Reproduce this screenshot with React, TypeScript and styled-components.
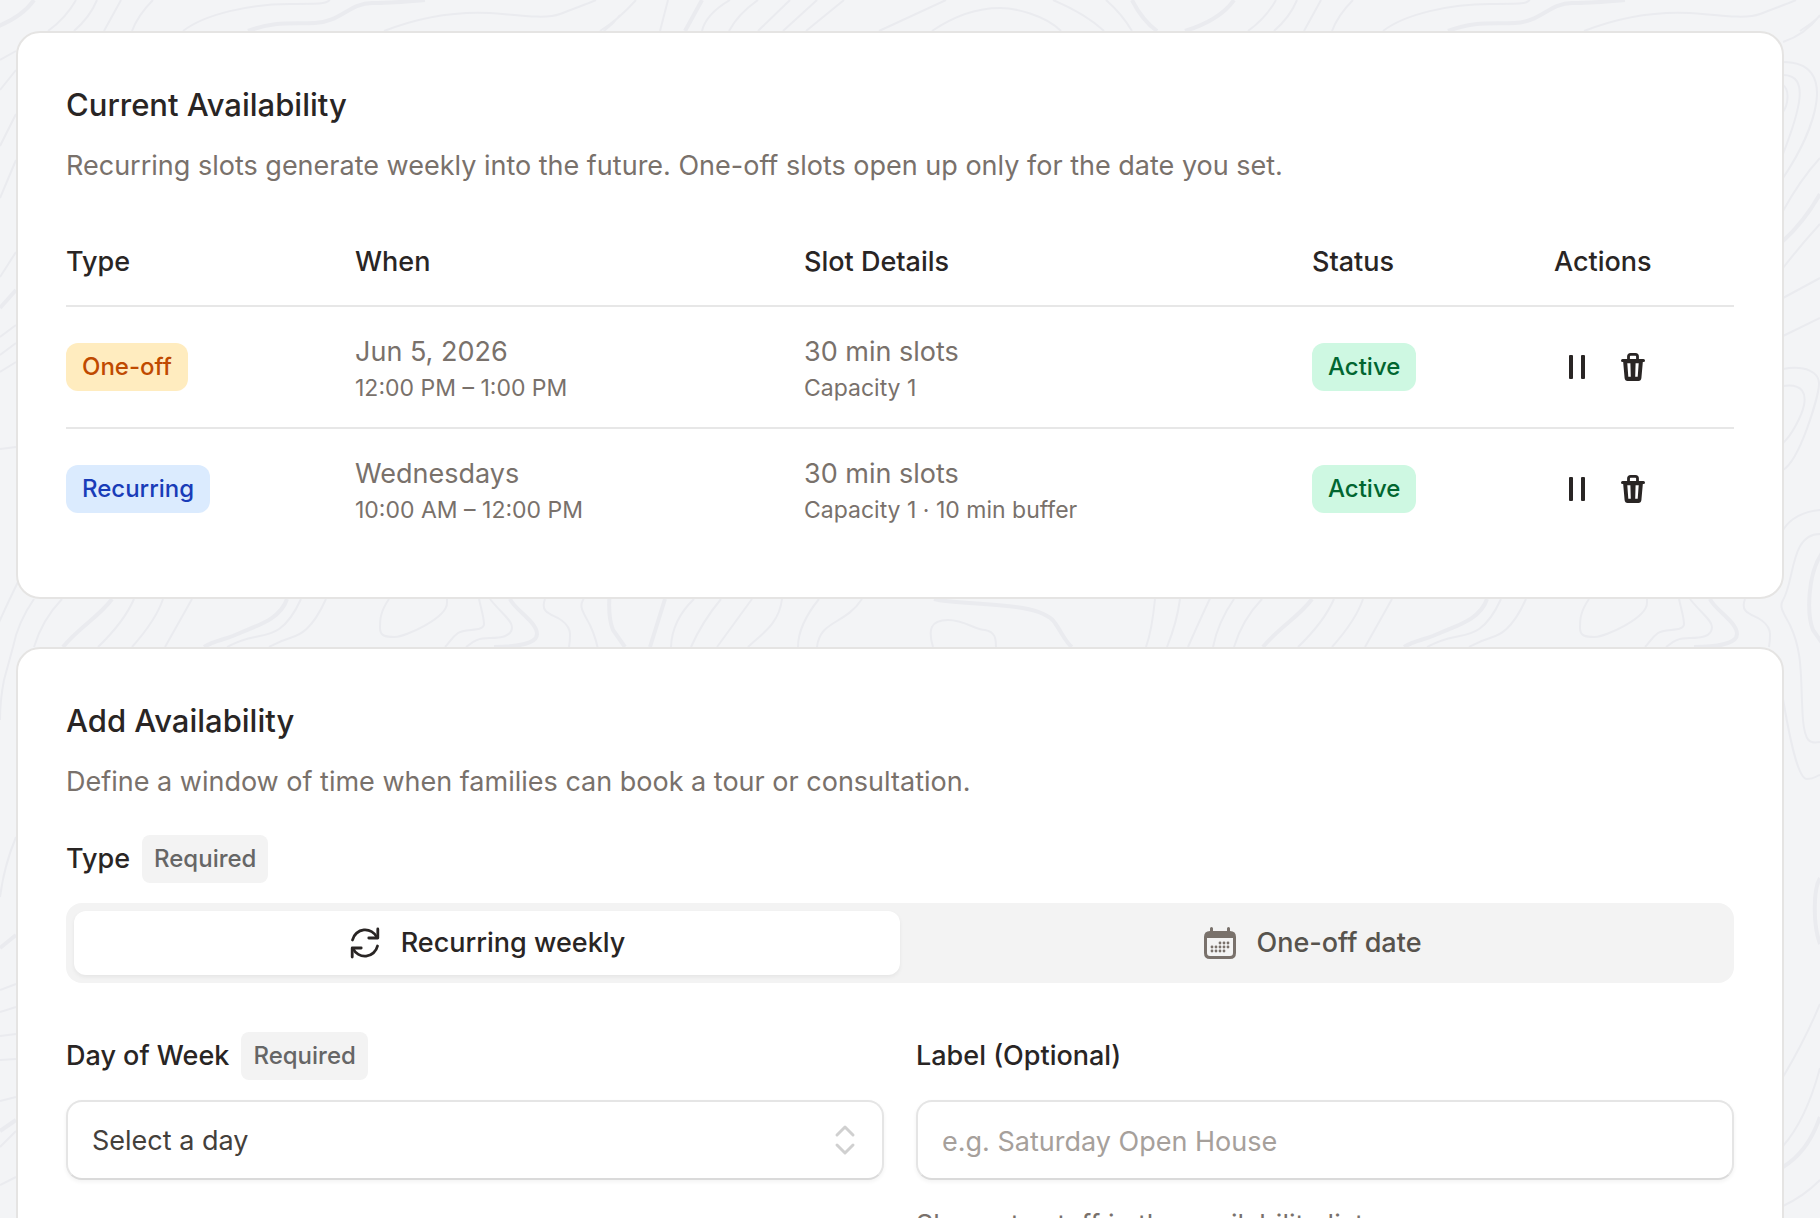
import React, { useState } from 'react';
import styled, { createGlobalStyle } from 'styled-components';

const GlobalStyle = createGlobalStyle`
  *, *::before, *::after { box-sizing: border-box; }
  body {
    margin: 0;
    background: #f3f4f6;
    color: #292524;
    font-family: Inter, "Liberation Sans", sans-serif;
    font-size: 27px;
    line-height: 42px;
  }
  button, input, select { font: inherit; color: inherit; }
`;

const Page = styled.main`
  position: relative;
  display: flex;
  flex-direction: column;
  gap: 48px;
  height: 100vh;
  padding: 31px 36px 0 16px;
  overflow: hidden;
`;

const Backdrop = styled.svg`
  position: absolute;
  inset: 0;
  width: 100%;
  height: 100%;
  fill: none;
  stroke: #eaebef;
  stroke-width: 2;
  pointer-events: none;
`;

const Card = styled.section`
  position: relative;
  flex: none;
  padding: 48px;
  background: #fff;
  border: 2px solid #e5e4e3;
  border-radius: 24px;
`;

const CardHeader = styled.header`
  display: flex;
  flex-direction: column;
  gap: 12px;
`;

const Title = styled.h2`
  margin: 0;
  font-size: 31px;
  font-weight: 500;
  line-height: 48px;
`;

const Description = styled.p`
  margin: 0;
  color: #79716b;
  line-height: 50px;
`;

const Table = styled.table`
  width: 100%;
  margin-top: 26px;
  table-layout: fixed;
  border-collapse: separate;
  border-spacing: 0;
`;

const Column = styled.col<{ $width: number }>`
  width: ${(p) => p.$width}px;
`;

const HeadCell = styled.th`
  padding: 24px 0 22px;
  border-bottom: 2px solid #e7e7e7;
  font-weight: 500;
  text-align: left;
`;

const Row = styled.tr`
  &:not(:last-child) > td { border-bottom: 2px solid #e7e7e7; }
`;

const Cell = styled.td`
  padding: 24px 0;
  color: #79716b;
  vertical-align: middle;
`;

const Primary = styled.div`
  line-height: 42px;
`;

const Secondary = styled.div`
  font-size: 23px;
  line-height: 30px;
`;

const tones = {
  amber: { bg: '#ffecbf', fg: '#bf4a00' },
  blue: { bg: '#dbebfe', fg: '#193cb8' },
  green: { bg: '#cef8e2', fg: '#016630' },
};

const Badge = styled.span<{ $tone: keyof typeof tones }>`
  display: block;
  width: fit-content;
  padding: 0 16px;
  border-radius: 12px;
  background: ${(p) => tones[p.$tone].bg};
  color: ${(p) => tones[p.$tone].fg};
  font-size: 24px;
  font-weight: 500;
  line-height: 48px;
`;

const Actions = styled.div`
  display: flex;
  gap: 8px;
`;

const IconButton = styled.button`
  display: grid;
  place-items: center;
  width: 48px;
  height: 48px;
  padding: 0;
  border: 0;
  border-radius: 12px;
  background: none;
  color: #292524;
  cursor: pointer;
  &:hover { background: #f3f3f3; }
`;

const Icon = styled.svg`
  flex: none;
  width: 32px;
  height: 32px;
`;

const LabelRow = styled.div`
  display: flex;
  align-items: center;
  gap: 12px;
  height: 48px;
  margin-bottom: 20px;
`;

const Label = styled.label`
  font-weight: 500;
`;

const Required = styled.span`
  padding: 0 12px;
  border-radius: 8px;
  background: #f3f3f3;
  color: #666;
  font-size: 24px;
  font-weight: 500;
  line-height: 48px;
`;

const TypeField = styled.div`
  margin-top: 28px;
`;

const Segmented = styled.div`
  display: grid;
  grid-template-columns: 1fr 1fr;
  padding: 8px;
  border-radius: 16px;
  background: #f3f3f3;
`;

const Segment = styled.button<{ $active: boolean }>`
  display: flex;
  align-items: center;
  justify-content: center;
  gap: 20px;
  height: 64px;
  padding: 0;
  border: 0;
  border-radius: 12px;
  background: ${(p) => (p.$active ? '#fff' : 'transparent')};
  box-shadow: ${(p) => (p.$active ? '0 2px 4px rgba(0, 0, 0, 0.06)' : 'none')};
  color: ${(p) => (p.$active ? '#292524' : '#57534d')};
  font-weight: 500;
  cursor: pointer;
  & > svg { color: ${(p) => (p.$active ? '#292524' : '#79716b')}; }
`;

const Fields = styled.div`
  display: grid;
  grid-template-columns: 1fr 1fr;
  gap: 32px;
  margin-top: 49px;
`;

const Control = styled.div`
  position: relative;
`;

const controlStyle = `
  display: block;
  width: 100%;
  height: 80px;
  padding: 2px 24px 0;
  border: 2px solid #e5e5e5;
  border-bottom-color: #dadada;
  border-radius: 16px;
  background: #fff;
  box-shadow: 0 2px 4px rgba(0, 0, 0, 0.05);
  outline-color: #a6a09b;
`;

const Select = styled.select`
  ${controlStyle}
  appearance: none;
  color: #44403b;
`;

const Input = styled.input`
  ${controlStyle}
  &::placeholder { color: #a6a09b; opacity: 1; }
`;

const SelectArrows = styled(Icon)`
  position: absolute;
  top: 24px;
  right: 23px;
  color: #d0d0d0;
  pointer-events: none;
`;

const Hint = styled.p`
  margin: 24px 0 0;
  color: #79716b;
`;

const THIN_LINES = [
  // top edge
  'M76 0Q66 18 48 31', 'M97 0Q90 17 74 31', 'M121 0L104 31', 'M153 0Q138 15 132 31',
  'M183 31C205 14 250 4 290 4S325 3 330 0', 'M384 31C430 13 470 12 490 13S545 20 560 14S590 3 596 0',
  'M636 0Q618 20 600 31', 'M668 0L660 31', 'M730 0Q706 14 702 31', 'M758 0Q738 14 729 31',
  'M790 0L758 31', 'M817 0L783 31', 'M844 0L806 31', 'M946 0L879 31',
  'M932 31C960 12 985 8 1000 8S1045 15 1061 31', 'M1053 0Q1086 14 1104 31', 'M1106 0Q1122 14 1132 31',
  // band between the cards
  'M18 582Q6 606 -12 647', 'M34 599Q18 622 13 647L4 680Q0 700 0 720', 'M62 599Q42 620 34 647',
  'M134 599Q124 622 98 647', 'M163 599Q156 620 132 647', 'M192 599L165 647',
  'M301 599C285 634 270 634 255 637S235 643 227 647', 'M326 599C312 630 300 635 290 638S274 645 269 647',
  'M389 599C380 612 380 620 380 628S385 637 395 637S447 618 447 603V599',
  'M479 599C482 612 484 618 484 624C484 632 465 628 458 633S450 642 445 647',
  'M490 599C500 612 512 620 512 627C512 637 500 638 490 638C475 638 472 643 466 647',
  'M545 599C540 612 550 614 558 618C572 626 571 634 569 647',
  'M620 534C590 534 595 580 583 600C579 607 583 612 590 625C604 655 600 680 603 720C605 742 610 744 620 742',
  'M694 599Q672 620 671 647', 'M721 599Q702 622 691 647', 'M752 599L717 647',
  'M782 599C779 625 760 635 748 647', 'M819 599Q798 625 798 647', 'M862 599C845 625 820 620 817 647',
  'M933 647C928 630 930 620 948 620C965 620 975 630 985 630C995 632 996 638 996 647',
  'M1155 599Q1152 630 1146 647', 'M1180 599Q1177 622 1167 647',
  // right margin
  'M583 42Q606 34 620 15', 'M583 62C640 62 615 130 583 178', 'M583 75C610 75 600 110 583 154',
  'M583 85C590 90 588 105 583 112', 'M583 211Q600 180 620 158', 'M583 268Q600 246 620 224',
  'M583 298L620 278', 'M583 336L620 318', 'M583 369C605 365 620 372 619 385S600 460 583 470',
  'M583 386C604 383 606 395 604 405S592 435 583 443', 'M583 530C590 518 605 511 620 510',
  'M583 699C590 740 598 779 607 779S615 776 620 775', 'M583 1077Q605 1040 620 1004',
  'M583 1146Q606 1120 620 1068', 'M583 1206Q604 1196 620 1180',
  // left margin
  'M16 51L0 60', 'M16 70L0 90', 'M16 114L0 146', 'M16 160L0 198', 'M16 252L0 277', 'M16 325L0 337',
  'M16 343L0 355', 'M16 362L0 372', 'M16 447L0 449', 'M16 837Q4 866 0 897', 'M16 984L0 990',
  'M16 1007L0 1012', 'M16 1034L0 1036', 'M16 1059L0 1060', 'M16 1097L0 1101', 'M16 1131L0 1147', 'M16 1177L0 1185',
];

const THICK_LINES = [
  'M34 0Q20 20 -15 31', 'M248 31C275 21 290 24 315 23S350 3 372 3S410 1 425 0', 'M702 0L685 31',
  'M1132 0Q1142 20 1157 31', 'M112 599C100 616 78 628 63 647',
  'M287 599C280 620 255 626 240 633S215 640 204 647',
  'M510 599C515 610 537 622 537 634C537 644 515 647 494 647',
  'M622 553C607 575 607 615 613 630L625 647', 'M665 599L650 647',
  'M934 599C960 606 1040 600 1055 623C1062 633 1066 643 1072 647',
  'M583 241Q604 222 620 194', 'M620 878C613 890 613 925 620 944', 'M583 1167Q608 1152 620 1117',
  'M16 290L0 308', 'M16 935L0 948', 'M16 1120L0 1131',
];

const ContourBackdrop = () => (
  <Backdrop aria-hidden="true">
    <defs>
      <g id="contours">
        <path d={THIN_LINES.join('')} />
        <path d={THICK_LINES.join('')} strokeWidth="4" />
      </g>
    </defs>
    <use href="#contours" />
    <use href="#contours" x="1200" />
  </Backdrop>
);

const PauseIcon = () => (
  <Icon viewBox="0 0 32 32" fill="currentColor" aria-hidden="true">
    <rect x="7" y="4" width="4" height="24" rx="1" />
    <rect x="19" y="4" width="4" height="24" rx="1" />
  </Icon>
);

const TrashIcon = () => (
  <Icon viewBox="0 0 32 32" fill="currentColor" aria-hidden="true">
    <path d="M10.5 8V5.5Q10.5 3.4 12.6 3.4H17.4Q19.5 3.4 19.5 5.5V8" fill="none" stroke="currentColor" strokeWidth="2.8" />
    <path d="M4.5 8H25.5A1.5 1.5 0 0 1 25.5 11H4.5A1.5 1.5 0 0 1 4.5 8Z" />
    <path
      fillRule="evenodd"
      d="M5 9H25L23.4 27Q23.1 30 20.4 30H9.6Q6.9 30 6.6 27ZM9.3 12.2L10.3 25.8H12.8L12.4 12.2ZM17.6 12.2L17.2 25.8H19.7L20.7 12.2Z"
    />
  </Icon>
);

const SyncIcon = () => (
  <Icon viewBox="0 0 32 32" fill="none" stroke="currentColor" strokeWidth="2.8" strokeLinecap="round" strokeLinejoin="round" aria-hidden="true">
    <path d="M3.5 13A13 13 0 0 1 28 10.5" />
    <path d="M28.8 2V11H19.8" />
    <path d="M28.5 19A13 13 0 0 1 4 21.5" />
    <path d="M3.2 30V21H12.2" />
  </Icon>
);

const dots: Array<[number, number]> = [
  [16, 16], [20, 16], [24, 16],
  [8, 20], [12, 20], [16, 20], [20, 20], [24, 20],
  [8, 24], [12, 24], [16, 24], [20, 24],
];

const CalendarIcon = () => (
  <Icon viewBox="0 0 32 32" fill="currentColor" aria-hidden="true">
    <path fillRule="evenodd" d="M6 1.5a1.5 1.5 0 0 1 3 0V4H23V1.5a1.5 1.5 0 0 1 3 0V4Q32 4 32 10V26Q32 32 26 32H6Q0 32 0 26V10Q0 4 6 4ZM3 11V26Q3 29 6 29H26Q29 29 29 26V11Z" />
    {dots.map(([x, y]) => (
      <circle key={`${x}-${y}`} cx={x} cy={y} r="1.4" />
    ))}
  </Icon>
);

type Slot = {
  type: string;
  tone: keyof typeof tones;
  when: string;
  hours: string;
  length: string;
  details: string;
};

const slots: Slot[] = [
  { type: 'One-off', tone: 'amber', when: 'Jun 5, 2026', hours: '12:00 PM – 1:00 PM', length: '30 min slots', details: 'Capacity 1' },
  { type: 'Recurring', tone: 'blue', when: 'Wednesdays', hours: '10:00 AM – 12:00 PM', length: '30 min slots', details: 'Capacity 1 · 10 min buffer' },
];

const days = ['Monday', 'Tuesday', 'Wednesday', 'Thursday', 'Friday', 'Saturday', 'Sunday'];

export default function App() {
  const [kind, setKind] = useState<'weekly' | 'once'>('weekly');

  return (
    <Page>
      <GlobalStyle />
      <ContourBackdrop />
      <Card aria-labelledby="current-title">
        <CardHeader>
          <Title id="current-title">Current Availability</Title>
          <Description>
            Recurring slots generate weekly into the future. One-off slots open up only for the date you set.
          </Description>
        </CardHeader>
        <Table>
          <colgroup>
            <Column $width={289} />
            <Column $width={449} />
            <Column $width={508} />
            <Column $width={242} />
            <Column $width={180} />
          </colgroup>
          <thead>
            <tr>
              <HeadCell scope="col">Type</HeadCell>
              <HeadCell scope="col">When</HeadCell>
              <HeadCell scope="col">Slot Details</HeadCell>
              <HeadCell scope="col">Status</HeadCell>
              <HeadCell scope="col">Actions</HeadCell>
            </tr>
          </thead>
          <tbody>
            {slots.map((slot) => (
              <Row key={slot.type}>
                <Cell><Badge $tone={slot.tone}>{slot.type}</Badge></Cell>
                <Cell>
                  <Primary>{slot.when}</Primary>
                  <Secondary>{slot.hours}</Secondary>
                </Cell>
                <Cell>
                  <Primary>{slot.length}</Primary>
                  <Secondary>{slot.details}</Secondary>
                </Cell>
                <Cell><Badge $tone="green">Active</Badge></Cell>
                <Cell>
                  <Actions>
                    <IconButton type="button" aria-label="Pause"><PauseIcon /></IconButton>
                    <IconButton type="button" aria-label="Delete"><TrashIcon /></IconButton>
                  </Actions>
                </Cell>
              </Row>
            ))}
          </tbody>
        </Table>
      </Card>

      <Card aria-labelledby="add-title">
        <CardHeader>
          <Title id="add-title">Add Availability</Title>
          <Description>Define a window of time when families can book a tour or consultation.</Description>
        </CardHeader>
        <TypeField>
          <LabelRow>
            <Label as="span" id="type-label">Type</Label>
            <Required>Required</Required>
          </LabelRow>
          <Segmented role="group" aria-labelledby="type-label">
            <Segment type="button" $active={kind === 'weekly'} aria-pressed={kind === 'weekly'} onClick={() => setKind('weekly')}>
              <SyncIcon />
              Recurring weekly
            </Segment>
            <Segment type="button" $active={kind === 'once'} aria-pressed={kind === 'once'} onClick={() => setKind('once')}>
              <CalendarIcon />
              One-off date
            </Segment>
          </Segmented>
        </TypeField>
        <Fields>
          <div>
            <LabelRow>
              <Label htmlFor="day">Day of Week</Label>
              <Required>Required</Required>
            </LabelRow>
            <Control>
              <Select id="day" defaultValue="">
                <option value="">Select a day</option>
                {days.map((day) => (
                  <option key={day}>{day}</option>
                ))}
              </Select>
              <SelectArrows viewBox="0 0 32 32" fill="none" stroke="currentColor" strokeWidth="3" strokeLinecap="round" strokeLinejoin="round" aria-hidden="true">
                <path d="M8 11L16 3L24 11M8 21L16 29L24 21" />
              </SelectArrows>
            </Control>
          </div>
          <div>
            <LabelRow>
              <Label htmlFor="label">Label (Optional)</Label>
            </LabelRow>
            <Input id="label" type="text" placeholder="e.g. Saturday Open House" />
            <Hint>Shown to staff in the availability list.</Hint>
          </div>
        </Fields>
      </Card>
    </Page>
  );
}
